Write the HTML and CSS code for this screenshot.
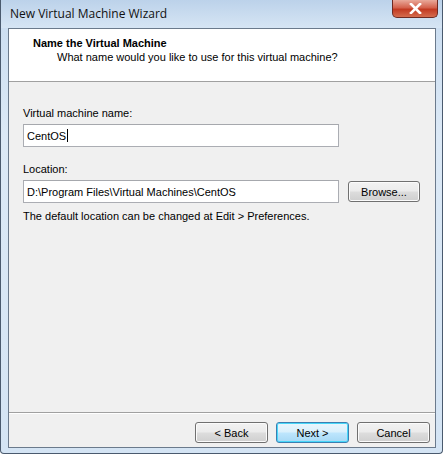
FILE: index.html
```html
<!DOCTYPE html>
<html lang="en">
<head>
    <meta charset="UTF-8">
    <title>New Virtual Machine Wizard</title>
    <link rel="stylesheet" href="styles.css">
</head>
<body>
    <div class="window">
        <div class="titlebar">
            <span class="title">New Virtual Machine Wizard</span>
            <button class="close-btn">
                <svg width="13" height="11" viewBox="0 0 13 11">
                    <path d="M2 1 L11 10 M11 1 L2 10" stroke="#fff" stroke-width="2.6" stroke-linecap="square"/>
                </svg>
            </button>
        </div>
        <div class="client">
            <div class="header">
                <div class="header-title">Name the Virtual Machine</div>
                <div class="header-sub">What name would you like to use for this virtual machine?</div>
            </div>
            <div class="body">
                <label class="field-label">Virtual machine name:</label>
                <div class="field-row name-row">
                    <div class="textbox">CentOS<span class="caret"></span></div>
                </div>
                <label class="field-label">Location:</label>
                <div class="field-row">
                    <div class="textbox">D:\Program Files\Virtual Machines\CentOS</div>
                    <button class="btn browse">Browse...</button>
                </div>
                <p class="hint">The default location can be changed at Edit &gt; Preferences.</p>
            </div>
            <div class="footer">
                <button class="btn">&lt; Back</button>
                <button class="btn default">Next &gt;</button>
                <button class="btn">Cancel</button>
            </div>
        </div>
        <div class="bottom-frame"></div>
    </div>
</body>
</html>
```

FILE: styles.css
```css
body {
    margin: 0;
    background: #fff;
    font-family: "Liberation Sans", Arial, sans-serif;
    font-size: 11px;
    color: #000;
}
.window {
    width: 441px;
    height: 453px;
    display: flex;
    flex-direction: column;
    background: linear-gradient(to bottom, #c9dcf0 0%, #dce9f6 30%, #d4e4f4 100%);
    border: 1px solid #4a5a6e;
    border-top: none;
    border-radius: 0 0 4px 4px;
}
.titlebar {
    height: 28px;
    display: flex;
    align-items: flex-start;
    justify-content: space-between;
    background: linear-gradient(to bottom, #bcd2ea 0%, #d6e5f4 100%);
}
.title {
    font-family: "Open Sans", "Noto Sans", sans-serif;
    font-size: 12px;
    margin: 5px 0 0 9px;
    color: #111;
}
.close-btn {
    width: 46px;
    height: 18px;
    margin-right: 4px;
    border: 1px solid #6e2a22;
    border-top: none;
    border-radius: 0 0 5px 5px;
    background: linear-gradient(to bottom, #e9a99a 0%, #d4624d 45%, #c23a22 55%, #d56c4e 100%);
    display: flex;
    align-items: center;
    justify-content: center;
    padding: 0;
}
.client {
    flex: 1;
    margin: 0 6px 0 7px;
    border: 1px solid #6b7a8c;
    background: #f0f0f0;
    display: flex;
    flex-direction: column;
}
.header {
    background: #fff;
    height: 53px;
    border-bottom: 1px solid #a0a0a0;
    padding: 8px 0 0 24px;
    box-sizing: border-box;
}
.header-title {
    font-weight: bold;
    height: 13px;
}
.header-sub {
    padding-left: 24px;
    margin-top: 1px;
}
.body {
    flex: 1;
    padding: 25px 0 0 14px;
    display: flex;
    flex-direction: column;
    border-bottom: 1px solid #a0a0a0;
    box-shadow: 0 1px 0 #fff;
}
.field-label {
    height: 13px;
    margin-bottom: 4px;
}
.field-row {
    display: flex;
    align-items: flex-start;
    gap: 9px;
    margin-bottom: 7px;
}
.name-row {
    margin-bottom: 16px;
}
.textbox {
    width: 316px;
    height: 23px;
    box-sizing: border-box;
    background: #fff;
    border: 1px solid #abadb3;
    border-top-color: #a6a8ad;
    padding: 4px 3px;
    display: flex;
    align-items: center;
}
.caret {
    display: inline-block;
    width: 1px;
    height: 13px;
    background: #000;
    margin-left: 1px;
}
.btn {
    width: 73px;
    height: 21px;
    font-family: "Liberation Sans", Arial, sans-serif;
    font-size: 11px;
    color: #000;
    border: 1px solid #707070;
    border-radius: 3px;
    background: linear-gradient(to bottom, #f2f2f2 0%, #ebebeb 49%, #dddddd 51%, #cfcfcf 100%);
    box-shadow: inset 0 0 0 1px #fbfbfb;
    padding: 0;
}
.browse {
    width: 72px;
    margin-top: 1px;
}
.hint {
    margin: 0;
}
.footer {
    height: 34px;
    display: flex;
    justify-content: flex-end;
    align-items: flex-start;
    gap: 8px;
    padding: 9px 5px 0 0;
    box-sizing: border-box;
}
.btn.default {
    border-color: #3c7fb1;
    box-shadow: inset 0 0 0 1px #48d7f9;
    background: linear-gradient(to bottom, #eaf6fd 0%, #d9f0fc 49%, #bee6fd 51%, #a7d9f5 100%);
}
.bottom-frame {
    height: 5px;
}
```
